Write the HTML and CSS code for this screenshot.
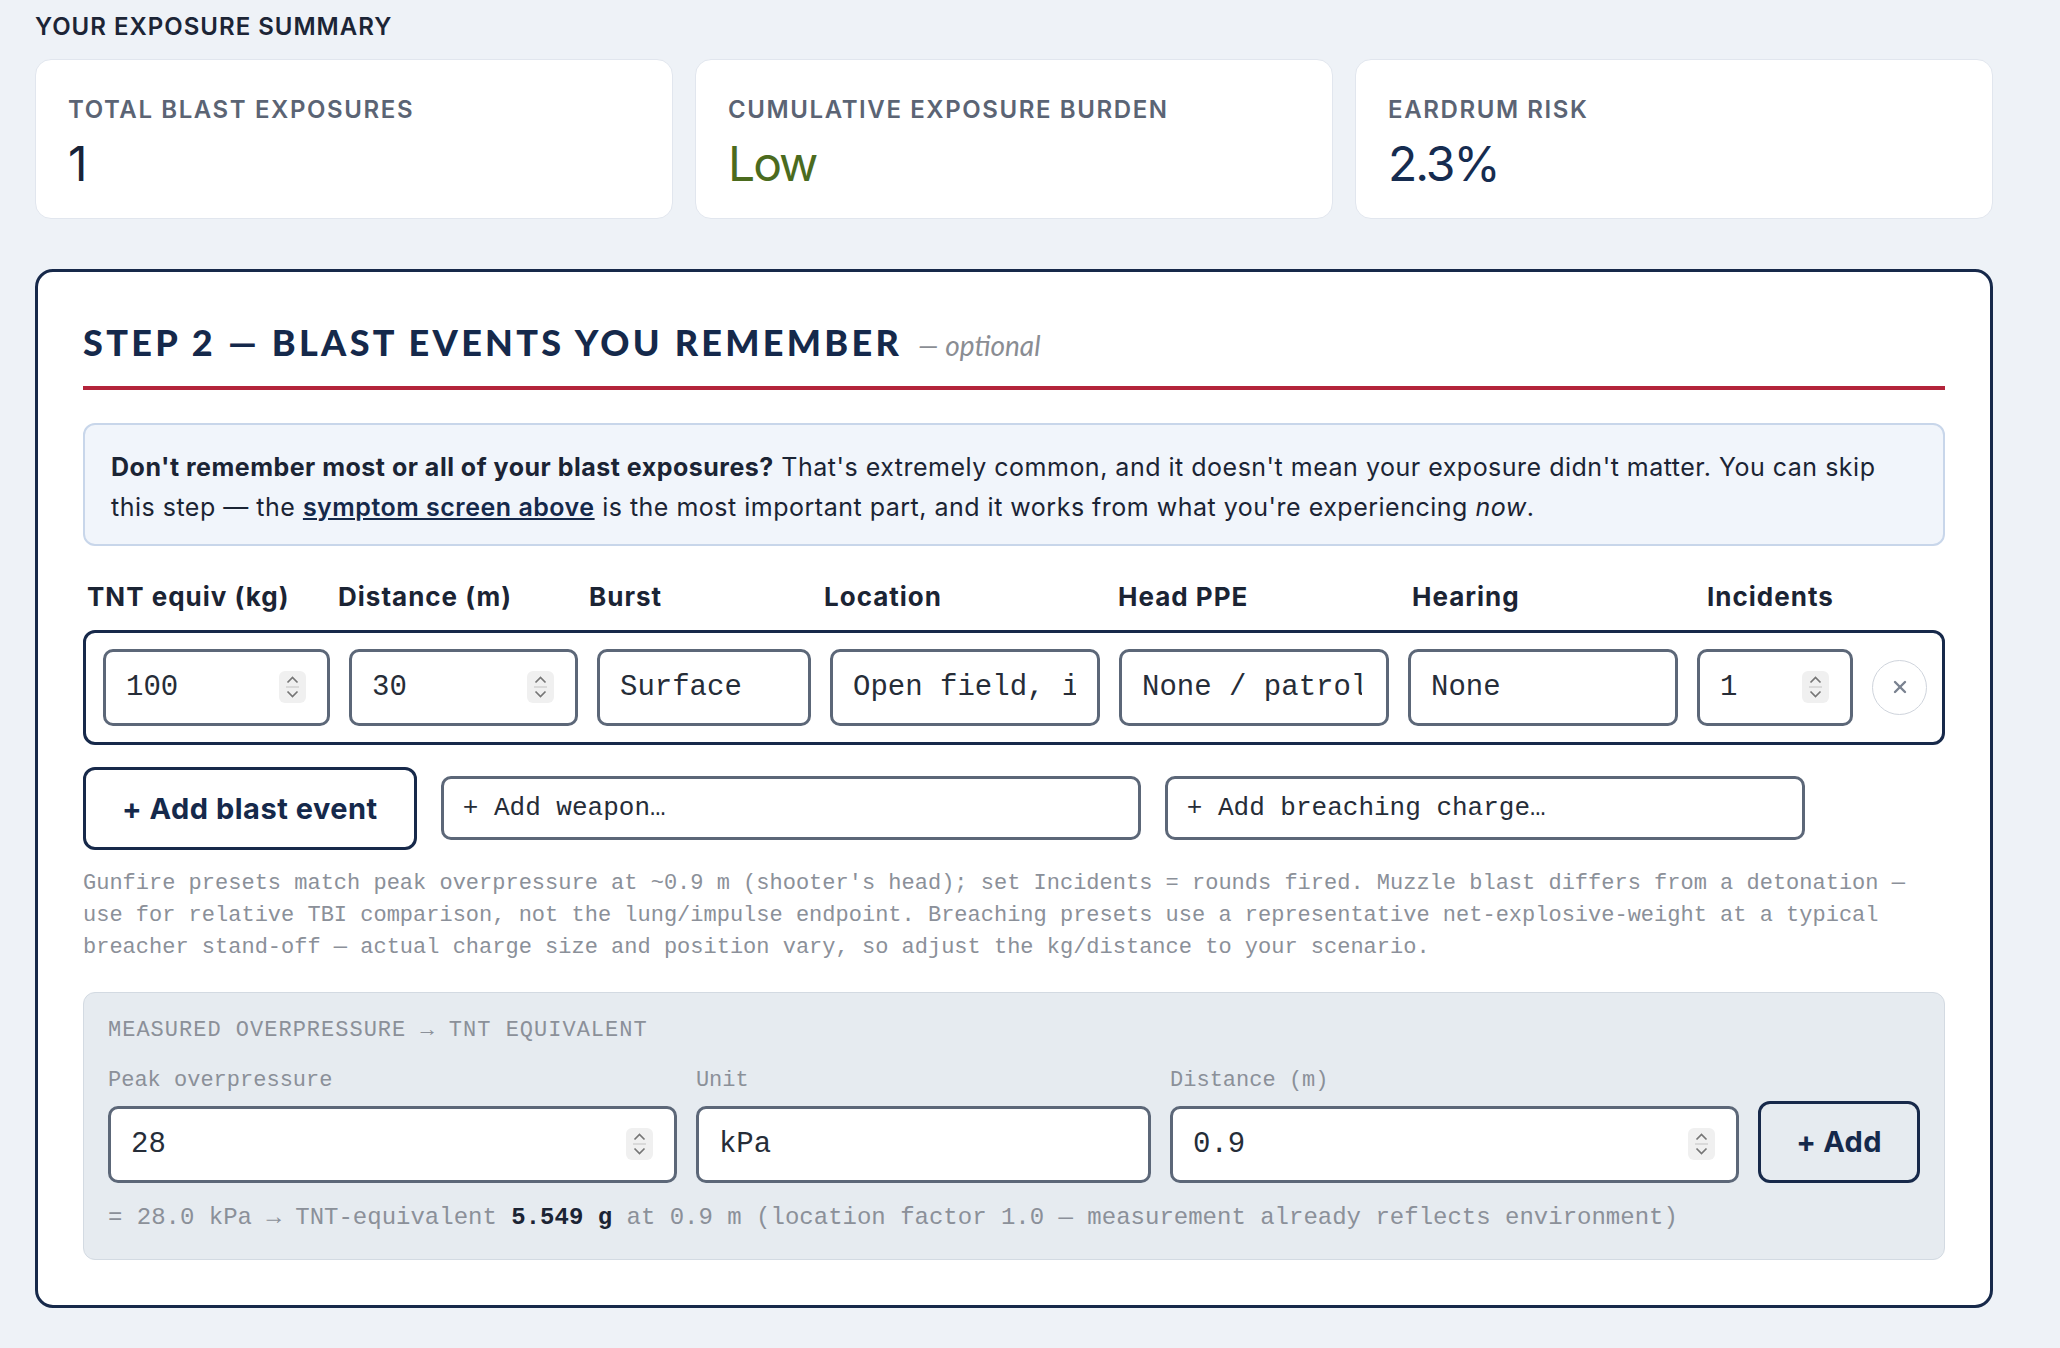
FILE: index.html
```html
<!DOCTYPE html>
<html lang="en">
<head>
    <meta charset="UTF-8">
    <meta name="viewport" content="width=device-width, initial-scale=1.0">
    <title>Blast Exposure - Step 2</title>
    <link rel="stylesheet" href="styles.css">
</head>
<body>
    <div class="page">

        <!-- SUMMARY CARDS -->
        <h3 class="summary-title">Your exposure summary</h3>
        <div class="stats">
            <div class="stat">
                <div class="stat-label">Total blast exposures</div>
                <div class="stat-value">1</div>
            </div>
            <div class="stat">
                <div class="stat-label">Cumulative exposure burden</div>
                <div class="stat-value low">Low</div>
            </div>
            <div class="stat">
                <div class="stat-label">Eardrum risk</div>
                <div class="stat-value risk">2.3%</div>
            </div>
        </div>

        <!-- STEP 2 -->
        <section class="step">
            <h2 class="step-title">Step 2 — Blast events you remember <span class="optional">— optional</span></h2>

            <div class="note">
                <strong>Don't remember most or all of your blast exposures?</strong> That's extremely common, and it doesn't mean your exposure didn't matter. You can skip this step — the <a href="#">symptom screen above</a> is the most important part, and it works from what you're experiencing <em>now</em>.
            </div>

            <div class="event-head">
                <span>TNT equiv (kg)</span>
                <span>Distance (m)</span>
                <span>Burst</span>
                <span>Location</span>
                <span>Head PPE</span>
                <span>Hearing</span>
                <span>Incidents</span>
            </div>

            <div class="event-row">
                <div class="field">
                    <input type="text" value="100">
                    <span class="spin"><svg width="27" height="32" viewBox="0 0 27 32"><polyline points="8.5,11.5 13.5,6.5 18.5,11.5"/><line x1="7" y1="16" x2="20" y2="16" class="sep"/><polyline points="8.5,20.5 13.5,25.5 18.5,20.5"/></svg></span>
                </div>
                <div class="field">
                    <input type="text" value="30">
                    <span class="spin"><svg width="27" height="32" viewBox="0 0 27 32"><polyline points="8.5,11.5 13.5,6.5 18.5,11.5"/><line x1="7" y1="16" x2="20" y2="16" class="sep"/><polyline points="8.5,20.5 13.5,25.5 18.5,20.5"/></svg></span>
                </div>
                <div class="field"><input type="text" value="Surface"></div>
                <div class="field"><input type="text" value="Open field, in the open"></div>
                <div class="field wide-pad"><input type="text" value="None / patrol cap"></div>
                <div class="field"><input type="text" value="None"></div>
                <div class="field">
                    <input type="text" value="1">
                    <span class="spin"><svg width="27" height="32" viewBox="0 0 27 32"><polyline points="8.5,11.5 13.5,6.5 18.5,11.5"/><line x1="7" y1="16" x2="20" y2="16" class="sep"/><polyline points="8.5,20.5 13.5,25.5 18.5,20.5"/></svg></span>
                </div>
                <button class="remove-btn" title="Remove">
                    <svg width="16" height="16" viewBox="0 0 16 16"><line x1="3" y1="3" x2="13" y2="13"/><line x1="13" y1="3" x2="3" y2="13"/></svg>
                </button>
            </div>

            <div class="add-row">
                <button class="add-btn">+ Add blast event</button>
                <select class="preset weapon"><option>+ Add weapon…</option></select>
                <select class="preset breach"><option>+ Add breaching charge…</option></select>
            </div>

            <p class="hint">Gunfire presets match peak overpressure at ~0.9 m (shooter's head); set Incidents = rounds fired. Muzzle blast differs from a detonation — use for relative TBI comparison, not the lung/impulse endpoint. Breaching presets use a representative net-explosive-weight at a typical breacher stand-off — actual charge size and position vary, so adjust the kg/distance to your scenario.</p>

            <!-- MEASURED OVERPRESSURE CONVERTER -->
            <div class="measure">
                <div class="measure-title">Measured overpressure → TNT equivalent</div>
                <div class="measure-grid">
                    <label class="mfield">
                        <span class="mlabel">Peak overpressure</span>
                        <div class="field">
                            <input type="text" value="28">
                            <span class="spin"><svg width="27" height="32" viewBox="0 0 27 32"><polyline points="8.5,11.5 13.5,6.5 18.5,11.5"/><line x1="7" y1="16" x2="20" y2="16" class="sep"/><polyline points="8.5,20.5 13.5,25.5 18.5,20.5"/></svg></span>
                        </div>
                    </label>
                    <label class="mfield">
                        <span class="mlabel">Unit</span>
                        <div class="field"><input type="text" value="kPa"></div>
                    </label>
                    <label class="mfield">
                        <span class="mlabel">Distance (m)</span>
                        <div class="field">
                            <input type="text" value="0.9">
                            <span class="spin"><svg width="27" height="32" viewBox="0 0 27 32"><polyline points="8.5,11.5 13.5,6.5 18.5,11.5"/><line x1="7" y1="16" x2="20" y2="16" class="sep"/><polyline points="8.5,20.5 13.5,25.5 18.5,20.5"/></svg></span>
                        </div>
                    </label>
                    <button class="add-small">+ Add</button>
                </div>
                <p class="measure-result">= 28.0 kPa → TNT-equivalent <b>5.549 g</b> at 0.9 m (location factor 1.0 — measurement already reflects environment)</p>
            </div>
        </section>
    </div>
</body>
</html>
```

FILE: styles.css
```css
/* General */
body {
    margin: 0;
    background: #eef2f7;
    font-family: 'Inter', 'Noto Sans', sans-serif;
    color: #1b2434;
}

.page {
    width: 1958px;
    padding: 13px 0 40px 35px;
}

/* Summary */
.summary-title {
    margin: 0 0 17px;
    font-size: 24px;
    line-height: 1.2;
    font-weight: 600;
    letter-spacing: 1px;
    text-transform: uppercase;
    color: #1c2536;
}

.stats {
    display: grid;
    grid-template-columns: repeat(3, 1fr);
    gap: 22px;
}

.stat {
    background: #fff;
    border: 1px solid #e1e6ee;
    border-radius: 16px;
    padding: 36px 32px 30px;
}

.stat-label {
    font-size: 24px;
    line-height: 1.2;
    font-weight: 600;
    letter-spacing: 1.6px;
    text-transform: uppercase;
    color: #5b6474;
    margin-bottom: 15px;
}

.stat-value {
    font-size: 48px;
    line-height: 48px;
    letter-spacing: -2px;
    color: #182338;
}

.stat-value.low { color: #4b6b1e; }
.stat-value.risk { color: #162c50; }

/* Step panel */
.step {
    margin-top: 50px;
    background: #fff;
    border: 3px solid #17294a;
    border-radius: 18px;
    padding: 49px 45px 45px;
}

.step-title {
    margin: 0 0 33px;
    padding-bottom: 22px;
    border-bottom: 4px solid #b3243a;
    font-family: 'Lato', sans-serif;
    font-weight: 900;
    font-size: 36px;
    line-height: 1.2;
    letter-spacing: 3.3px;
    text-transform: uppercase;
    color: #15294b;
}

.optional {
    font-weight: 400;
    font-style: italic;
    font-size: 28px;
    letter-spacing: 0;
    text-transform: none;
    color: #8a8d93;
    margin-left: 4px;
}

/* Info note */
.note {
    background: #f1f5fb;
    border: 2px solid #c8d6ea;
    border-radius: 12px;
    padding: 22px 26px 17px;
    font-size: 25px;
    letter-spacing: 0.5px;
    line-height: 40px;
}

.note strong { font-weight: 700; }

.note a {
    color: #15294b;
    font-weight: 600;
    text-decoration: underline;
}

/* Event grid */
.event-head {
    margin-top: 36px;
    display: grid;
    grid-template-columns: 233px 233px 217px 276px 276px 277px 1fr;
    column-gap: 18px;
    padding: 0 4px;
    font-size: 26px;
    letter-spacing: 1px;
    line-height: 30px;
    font-weight: 700;
    color: #1b2434;
}

.event-row {
    margin-top: 18px;
    display: grid;
    grid-template-columns: 227px 229px 214px 270px 270px 270px 156px 55px;
    column-gap: 19px;
    align-items: center;
    border: 3px solid #17294a;
    border-radius: 12px;
    padding: 16px 15px 16px 17px;
}

.field {
    display: flex;
    align-items: center;
    height: 77px;
    box-sizing: border-box;
    border: 3px solid #5c6778;
    border-radius: 10px;
    background: #fff;
    padding: 0 21px 0 20px;
    overflow: hidden;
}

.field.wide-pad {
    padding-right: 24px;
}

.field input {
    flex: 1;
    min-width: 0;
    border: none;
    outline: none;
    padding: 0;
    background: transparent;
    font-family: 'Liberation Mono', monospace;
    font-size: 29px;
    color: #262d38;
}

.spin {
    display: flex;
    width: 27px;
    height: 32px;
    border-radius: 6px;
    background: #f0f0f0;
    margin-left: 8px;
}

.spin polyline {
    fill: none;
    stroke: #767676;
    stroke-width: 1.7;
}

.spin .sep {
    stroke: #d2d2d2;
    stroke-width: 1.5;
}

.remove-btn {
    width: 55px;
    height: 55px;
    border-radius: 50%;
    border: 1px solid #cfd4dc;
    background: #fff;
    display: flex;
    align-items: center;
    justify-content: center;
    padding: 0;
    cursor: pointer;
}

.remove-btn line {
    stroke: #7a8290;
    stroke-width: 2.4;
    stroke-linecap: round;
}

/* Add row */
.add-row {
    margin-top: 22px;
    display: flex;
    align-items: center;
    gap: 24px;
}

.add-btn {
    height: 83px;
    padding: 0 36px;
    background: #fff;
    border: 3px solid #17294a;
    border-radius: 12px;
    font-family: 'Inter', sans-serif;
    font-size: 29px;
    letter-spacing: 0.5px;
    font-weight: 700;
    color: #15294b;
    cursor: pointer;
}

.preset {
    appearance: none;
    -webkit-appearance: none;
    height: 64px;
    padding: 0 19px;
    background: #fff;
    border: 3px solid #5c6778;
    border-radius: 10px;
    font-family: 'Liberation Mono', monospace;
    font-size: 26px;
    color: #262d38;
}

.preset.weapon { width: 700px; }
.preset.breach { width: 640px; }

.hint {
    margin: 18px 0 0;
    font-family: 'Liberation Mono', monospace;
    font-size: 22px;
    line-height: 32px;
    color: #8b9099;
}

/* Measured overpressure */
.measure {
    margin-top: 28px;
    background: #e6ebf0;
    border: 1px solid #d3dae2;
    border-radius: 12px;
    padding: 25px 24px 28px;
    font-family: 'Liberation Mono', monospace;
    font-size: 22px;
    line-height: 26px;
    color: #8b9099;
}

.measure-title {
    text-transform: uppercase;
    letter-spacing: 1px;
    margin-bottom: 24px;
}

.measure-grid {
    display: grid;
    grid-template-columns: 1fr 0.8fr 1fr auto;
    column-gap: 19px;
    align-items: end;
}

.mfield {
    display: flex;
    flex-direction: column;
}

.mlabel {
    margin-bottom: 12px;
}

.add-small {
    width: 162px;
    height: 82px;
    background: transparent;
    border: 3px solid #17294a;
    border-radius: 12px;
    font-family: 'Inter', sans-serif;
    font-size: 29px;
    letter-spacing: 0.3px;
    font-weight: 700;
    color: #15294b;
    cursor: pointer;
}

.measure-result {
    margin: 22px 0 0;
    font-size: 24px;
}

.measure-result b {
    color: #1b2434;
    font-weight: 700;
}
```
